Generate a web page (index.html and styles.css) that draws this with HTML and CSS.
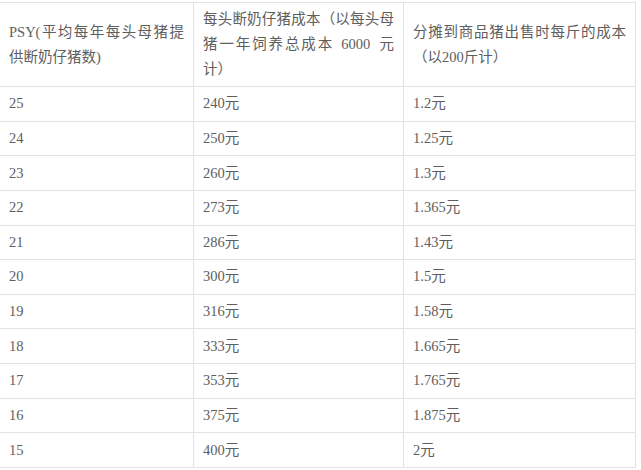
FILE: index.html
```html
<!DOCTYPE html>
<html lang="zh">
<head>
<meta charset="utf-8">
<link rel="stylesheet" href="styles.css">
</head>
<body>
<table class="grid">
  <colgroup>
    <col class="c1"><col class="c2"><col class="c3">
  </colgroup>
  <tr class="head">
    <td>PSY(平均每年每头母猪提供断奶仔猪数)</td>
    <td>每头断奶仔猪成本（以每头母猪一年饲养总成本&ensp;6000&ensp;元计）</td>
    <td>分摊到商品猪出售时每斤的成本（以200斤计）</td>
  </tr>
  <tr><td>25</td><td>240元</td><td>1.2元</td></tr>
  <tr><td>24</td><td>250元</td><td>1.25元</td></tr>
  <tr><td>23</td><td>260元</td><td>1.3元</td></tr>
  <tr><td>22</td><td>273元</td><td>1.365元</td></tr>
  <tr><td>21</td><td>286元</td><td>1.43元</td></tr>
  <tr><td>20</td><td>300元</td><td>1.5元</td></tr>
  <tr><td>19</td><td>316元</td><td>1.58元</td></tr>
  <tr><td>18</td><td>333元</td><td>1.665元</td></tr>
  <tr><td>17</td><td>353元</td><td>1.765元</td></tr>
  <tr><td>16</td><td>375元</td><td>1.875元</td></tr>
  <tr><td>15</td><td>400元</td><td>2元</td></tr>
</table>
</body>
</html>
```
FILE: styles.css
```css
html, body {
  margin: 0;
  padding: 0;
  background: #fff;
}
body {
  padding-top: 2px;
  font-family: "Liberation Serif", "Noto Sans CJK SC", serif;
  font-size: 14.5px;
  color: #5e5e5e;
}
.grid {
  border-collapse: collapse;
  table-layout: fixed;
  width: 636px;
  margin-left: -1px;
}
.c1 { width: 194px; }
.c2 { width: 210px; }
.c3 { width: 232px; }
.grid td {
  border: 1px solid #e3e3e3;
  padding: 0 9px;
  height: 34.64px;
  line-height: 25px;
  vertical-align: middle;
  text-align: justify;
  box-sizing: border-box;
}
.grid .head td {
  height: 84px;
}
```
